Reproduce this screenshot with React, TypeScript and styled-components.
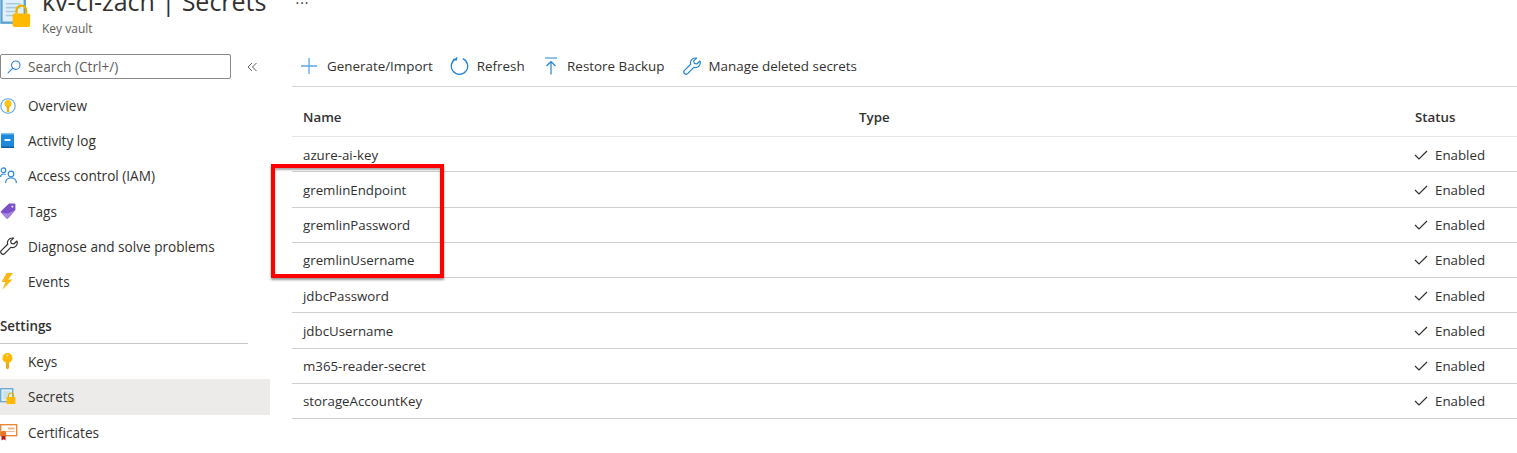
import React from 'react'
import styled, { createGlobalStyle } from 'styled-components'

const GlobalStyle = createGlobalStyle`
  html, body {
    margin: 0;
    height: 453px;
    overflow: hidden;
    background: #fff;
    font-family: "Open Sans", "Noto Sans", "Liberation Sans", sans-serif;
    color: #323130;
  }
`

const Page = styled.div`
  position: relative;
  width: 1517px;
  height: 453px;
  overflow: hidden;
`

const Header = styled.header`
  display: flex;
  height: 43px;
  margin-top: -13px;
  padding-bottom: 4px;
`

const HeaderIcon = styled.div`
  width: 42px;
  padding-top: 9px;
  flex: none;
`

const TitleBlock = styled.div`
  display: flex;
  flex-direction: column;
`

const Title = styled.h1`
  margin: 0;
  font-size: 25px;
  line-height: 29px;
  font-weight: 400;
  white-space: nowrap;
  color: #323130;
`

const Subtitle = styled.div`
  font-size: 12px;
  line-height: 16px;
  margin-top: 5px;
  color: #605e5c;
`

const More = styled.span`
  margin: 5px 0 0 29px;
  font-size: 14px;
  line-height: 14px;
  letter-spacing: 1px;
`

const Body = styled.div`
  display: flex;
  margin-top: 18px;
`

const Sidebar = styled.nav`
  width: 270px;
  flex: none;
  padding-top: 1px;
`

const SearchRow = styled.div`
  display: flex;
  align-items: flex-end;
  height: 26px;
  margin-bottom: 9px;
`

const SearchBox = styled.div`
  width: 231px;
  height: 25px;
  box-sizing: border-box;
  border: 1px solid #8a8886;
  border-radius: 2px;
  display: flex;
  align-items: center;
  gap: 7px;
  padding-left: 6px;
  font-size: 13.7px;
  color: #605e5c;
`

const Collapse = styled.span`
  margin: 0 0 7px 16px;
  display: flex;
`

const NavItem = styled.div<{ $active?: boolean }>`
  display: flex;
  align-items: center;
  height: 35.2px;
  background: ${p => (p.$active ? '#edebe9' : 'transparent')};
  font-size: 13.6px;
  white-space: nowrap;
`

const NavIcon = styled.span`
  width: 28px;
  flex: none;
  display: flex;
  align-items: center;
`

const SectionTitle = styled.div`
  margin: 19px 0 0;
  width: 248px;
  height: 25px;
  border-bottom: 1px solid #c8c6c4;
  font-size: 13.4px;
  font-weight: 600;
  line-height: 17px;
`

const Main = styled.main`
  flex: 1;
  margin-left: 22px;
  min-width: 0;
`

const Toolbar = styled.div`
  display: flex;
  align-items: center;
  height: 40px;
  border-bottom: 1px solid #d6d6d6;
  padding: 3px 0 0 8px;
  margin-top: -9px;
`

const ToolButton = styled.div<{ $gap: number; $after: number }>`
  display: flex;
  align-items: center;
  gap: ${p => p.$gap}px;
  margin-right: ${p => p.$after}px;
  font-size: 13.4px;
  white-space: nowrap;
  color: #323130;
`

const Row = styled.div<{ $head?: boolean }>`
  display: grid;
  grid-template-columns: 556px 556px 1fr;
  align-items: center;
  height: ${p => (p.$head ? '50px' : '35.25px')};
  box-sizing: border-box;
  padding: ${p => (p.$head ? '11px' : '1px')} 0 0 11px;
  border-bottom: 1px solid ${p => (p.$head ? '#e6e6e6' : '#cfcfcf')};
  font-size: 13.3px;
  font-weight: ${p => (p.$head ? 600 : 400)};
  color: #323130;
`

const StatusCell = styled.span`
  display: flex;
  align-items: center;
  gap: 7px;
  grid-column: 3;
  justify-self: start;
  margin-left: -1px;
`

const RedBox = styled.div`
  position: absolute;
  left: 271px;
  top: 164px;
  width: 173px;
  height: 114px;
  box-sizing: border-box;
  border: 4px solid #ff0000;
  box-shadow: 0 2px 2px rgba(0, 0, 0, 0.4), inset 0 2px 2px rgba(0, 0, 0, 0.35);
`

const SecretsIcon = ({ size }: { size: number }) => (
  <svg width={size} height={size} viewBox="0 0 34 34">
    <rect x="1.5" y="1.5" width="24" height="26" fill="#dff0fa" stroke="#5ea0ce" strokeWidth="2.4" />
    <path d="M6 8h15M6 12h15M6 16h10M6 20h8" stroke="#a9c9e0" strokeWidth="1.6" />
    <path d="M17 18v-3a5 5 0 0 1 10 0v3" fill="none" stroke="#e8b100" strokeWidth="2.4" />
    <rect x="13" y="18" width="18" height="14" rx="2" fill="#ffb900" />
  </svg>
)

const OverviewIcon = () => (
  <svg width="16" height="16" viewBox="0 0 16 16">
    <circle cx="8" cy="8" r="7.2" fill="#fff" stroke="#5ea7e6" strokeWidth="1.1" />
    <circle cx="8" cy="5.6" r="3.6" fill="#fcc419" />
    <path d="M6.8 8h2.4v5.2L8 14.4l-1.2-1.2z" fill="#f0b400" />
  </svg>
)

const ActivityIcon = () => (
  <svg width="15" height="17" viewBox="0 0 15 17">
    <path d="M1 2.5A1.5 1.5 0 0 1 2.5 1H14v15H2.5A1.5 1.5 0 0 1 1 14.5z" fill="#1e88dc" />
    <path d="M1 2.5A1.5 1.5 0 0 1 2.5 1H14v1.6H1z" fill="#7cc0f0" />
    <path d="M1 14.5A1.5 1.5 0 0 0 2.5 16H14v-1.5z" fill="#0f5c9c" />
    <rect x="4.5" y="7" width="6" height="2" fill="#e8f3fc" />
  </svg>
)

const AccessIcon = () => (
  <svg width="17" height="17" viewBox="0 0 17 17" fill="none" stroke="#2f86dd" strokeWidth="1.2">
    <circle cx="3.5" cy="3.2" r="2.3" />
    <circle cx="11" cy="7" r="2.8" />
    <path d="M0.6 10c0-2 1.2-3 3-3 .8 0 1.4.2 2 .6" />
    <path d="M5.6 16c0-3 2.2-5 5.4-5s5.4 2 5.4 5" />
  </svg>
)

const TagIcon = () => (
  <svg width="16" height="16" viewBox="0 0 16 16">
    <path d="M9 .6h5.4a1 1 0 0 1 1 1V7L8 15.4a1 1 0 0 1-1.4 0L1 9.6a1 1 0 0 1 0-1.4z" fill="#7b4fc9" />
    <path d="M1 9.6l5.6 5.8a1 1 0 0 0 1.4 0l7.4-8.4-7.6 3.6z" fill="#a883e0" />
    <circle cx="12.4" cy="3.6" r="1.1" fill="#e6dcf7" />
  </svg>
)

const WrenchIcon = ({ color }: { color: string }) => (
  <svg width="18" height="18" viewBox="0 0 18 18" fill="none" stroke={color} strokeWidth="1.2" strokeLinejoin="round">
    <path d="M12.2 1a4.8 4.8 0 0 0-4.5 6.3L1.2 13.6a2.3 2.3 0 0 0 3.2 3.2l6.4-6.5A4.8 4.8 0 0 0 16.9 4l-3.1 3-2.5-.6-.7-2.5 3-2.8A4.8 4.8 0 0 0 12.2 1z" />
  </svg>
)

const EventsIcon = () => (
  <svg width="14" height="17" viewBox="0 0 14 17">
    <path d="M6.5 0H13L8.2 6.4H12.5L2.5 16.6l3-7.6H1.6z" fill="#fbb814" />
  </svg>
)

const KeyIcon = () => (
  <svg width="14" height="17" viewBox="0 0 14 17">
    <circle cx="7.5" cy="5" r="5" fill="#ffb900" />
    <circle cx="7.5" cy="2.4" r="1" fill="#fff3c4" />
    <path d="M6 9h3v6l-1.5 1.6L6 15z" fill="#f2ab00" />
  </svg>
)

const CertificateIcon = () => (
  <svg width="18" height="18" viewBox="0 0 18 18">
    <rect x="0.7" y="1.7" width="16" height="11" fill="#fff" stroke="#e9822d" strokeWidth="1.3" />
    <rect x="8" y="4.5" width="6.5" height="2" fill="#f2b58a" />
    <rect x="5" y="8" width="9.5" height="1" fill="#f2b58a" />
    <path d="M1.5 12v5.5l2-1.2 2 1.2V12z" fill="#b8141d" />
    <circle cx="3.5" cy="10.5" r="2.7" fill="#e8752a" />
  </svg>
)

const SearchIcon = () => (
  <svg width="14" height="14" viewBox="0 0 14 14" fill="none" stroke="#2b7cd3" strokeWidth="1.1">
    <circle cx="8.8" cy="5.2" r="4.2" />
    <path d="M5.8 8.2L0.8 13.2" />
  </svg>
)

const DoubleChevron = () => (
  <svg width="10" height="10" viewBox="0 0 10 10" fill="none" stroke="#605e5c" strokeWidth="1">
    <path d="M5 1L1 5l4 4M9.5 1l-4 4 4 4" />
  </svg>
)

const PlusIcon = () => (
  <svg width="18" height="18" viewBox="0 0 18 18" stroke="#5ea7e6" strokeWidth="1.3">
    <path d="M9 1v16M1 9h16" />
  </svg>
)

const RefreshIcon = () => (
  <svg width="19" height="19" viewBox="0 0 19 19" fill="none" stroke="#1f84d8" strokeWidth="1.3">
    <path d="M6.2 1.6a8.2 8.2 0 1 0 6.6 0" />
    <path d="M7 0.2L6.2 3 3.2 2.4" />
  </svg>
)

const RestoreIcon = () => (
  <svg width="14" height="18" viewBox="0 0 14 18" fill="none" stroke="#1f84d8" strokeWidth="1.2">
    <path d="M1 1h12M7 4.5V17.5M2.5 9L7 4.5 11.5 9" />
  </svg>
)

const CheckIcon = () => (
  <svg width="14" height="10" viewBox="0 0 14 10" fill="none" stroke="#323130" strokeWidth="1.2">
    <path d="M1 5l4 4 8-8" />
  </svg>
)

const navTop = [
  { label: 'Overview', icon: <OverviewIcon /> },
  { label: 'Activity log', icon: <ActivityIcon /> },
  { label: 'Access control (IAM)', icon: <AccessIcon /> },
  { label: 'Tags', icon: <TagIcon /> },
  { label: 'Diagnose and solve problems', icon: <WrenchIcon color="#323130" /> },
  { label: 'Events', icon: <EventsIcon /> },
]

const secrets = [
  'azure-ai-key',
  'gremlinEndpoint',
  'gremlinPassword',
  'gremlinUsername',
  'jdbcPassword',
  'jdbcUsername',
  'm365-reader-secret',
  'storageAccountKey',
]

export default function App() {
  return (
    <Page>
      <GlobalStyle />
      <Header>
        <HeaderIcon>
          <SecretsIcon size={33} />
        </HeaderIcon>
        <TitleBlock>
          <Title>kv-ci-zach | Secrets</Title>
          <Subtitle>Key vault</Subtitle>
        </TitleBlock>
        <More>...</More>
      </Header>
      <Body>
        <Sidebar>
          <SearchRow>
            <SearchBox>
              <SearchIcon />
              Search (Ctrl+/)
            </SearchBox>
            <Collapse>
              <DoubleChevron />
            </Collapse>
          </SearchRow>
          {navTop.map(item => (
            <NavItem key={item.label}>
              <NavIcon>{item.icon}</NavIcon>
              {item.label}
            </NavItem>
          ))}
          <SectionTitle>Settings</SectionTitle>
          <NavItem>
            <NavIcon><KeyIcon /></NavIcon>
            Keys
          </NavItem>
          <NavItem $active>
            <NavIcon><SecretsIcon size={17} /></NavIcon>
            Secrets
          </NavItem>
          <NavItem>
            <NavIcon><CertificateIcon /></NavIcon>
            Certificates
          </NavItem>
        </Sidebar>
        <Main>
          <Toolbar>
            <ToolButton $gap={9} $after={17}><PlusIcon />Generate/Import</ToolButton>
            <ToolButton $gap={8} $after={19}><RefreshIcon />Refresh</ToolButton>
            <ToolButton $gap={9.5} $after={18}><RestoreIcon />Restore Backup</ToolButton>
            <ToolButton $gap={8} $after={0}><WrenchIcon color="#1f84d8" />Manage deleted secrets</ToolButton>
          </Toolbar>
          <Row $head>
            <span>Name</span>
            <span>Type</span>
            <span>Status</span>
          </Row>
          {secrets.map(name => (
            <Row key={name}>
              <span>{name}</span>
              <StatusCell>
                <CheckIcon />
                Enabled
              </StatusCell>
            </Row>
          ))}
        </Main>
      </Body>
      <RedBox />
    </Page>
  )
}
